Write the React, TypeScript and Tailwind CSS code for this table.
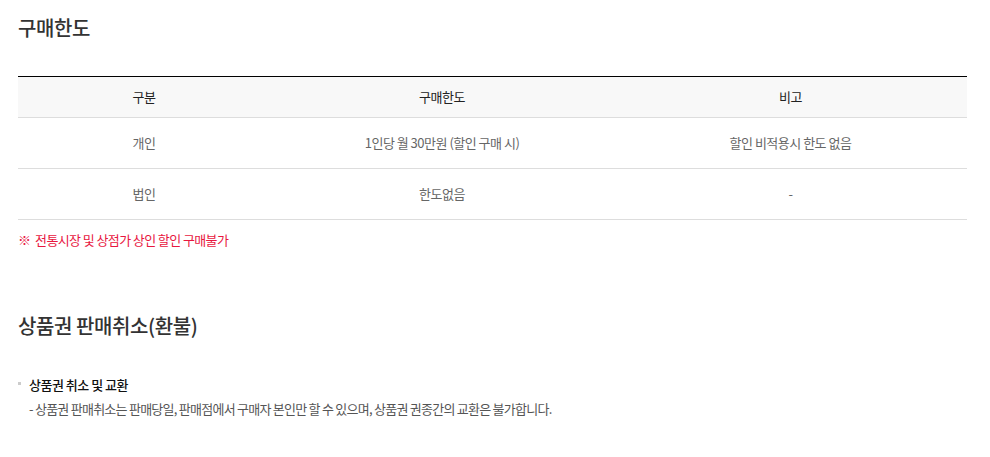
import React from 'react';

const font = { fontFamily: '"Noto Sans CJK KR", "Noto Sans", sans-serif' };

const rows = [
  ['개인', '1인당 월 30만원 (할인 구매 시)', '할인 비적용시 한도 없음'],
  ['법인', '한도없음', '-'],
];

export default function App() {
  return (
    <div className="w-[990px] h-[457px] bg-white px-[18px] pt-[13px] text-[#333] tracking-[-0.5px]" style={font}>
      <h2 className="text-[20px] leading-[30px] font-medium text-[#333] tracking-[-0.4px]">구매한도</h2>

      <table className="mt-[33px] w-[949px] border-t border-black text-[13px] leading-[18px]">
        <colgroup>
          <col className="w-[252px]" />
          <col className="w-[344px]" />
          <col />
        </colgroup>
        <thead>
          <tr className="bg-[#f8f8f8] h-[41px] border-b border-[#ddd]">
            <th className="font-normal text-[#222]">구분</th>
            <th className="font-normal text-[#222]">구매한도</th>
            <th className="font-normal text-[#222]">비고</th>
          </tr>
        </thead>
        <tbody>
          {rows.map((r) => (
            <tr key={r[0]} className="h-[51px] border-b border-[#ddd] text-[#666]">
              {r.map((c, i) => (
                <td key={i} className="text-center">{c}</td>
              ))}
            </tr>
          ))}
        </tbody>
      </table>

      <p className="mt-[11px] text-[13px] leading-[18px] text-[#e8173f] tracking-[-0.6px]">※&nbsp; 전통시장 및 상점가 상인 할인 구매불가</p>

      <h2 className="mt-[62px] text-[20px] leading-[30px] font-medium text-[#333] tracking-[-0.4px]">상품권 판매취소(환불)</h2>

      <div className="mt-[32px] flex gap-[8px]">
        <span className="mt-[9px] w-[3px] h-[3px] bg-[#ccc] shrink-0" />
        <div className="text-[13px] leading-[24px]">
          <p className="font-medium text-[#111]">상품권 취소 및 교환</p>
          <p className="text-[#555] tracking-[-0.75px]">- 상품권 판매취소는 판매당일, 판매점에서 구매자 본인만 할 수 있으며, 상품권 권종간의 교환은 불가합니다.</p>
        </div>
      </div>
    </div>
  );
}
